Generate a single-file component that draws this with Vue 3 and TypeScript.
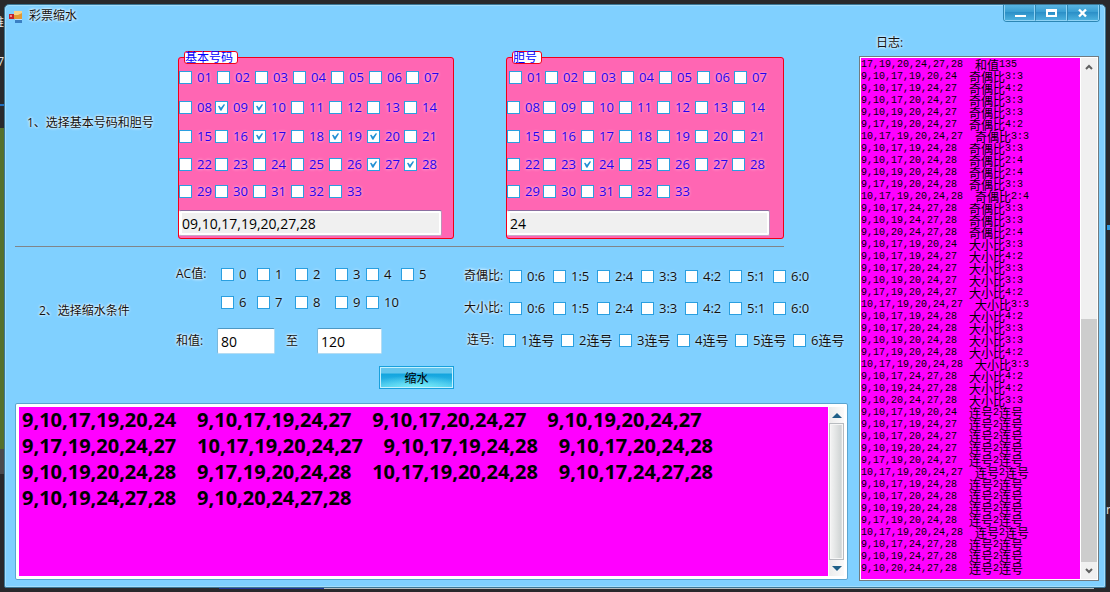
<script setup lang="ts">
import { ref } from 'vue'

interface Pool {
  key: string
  title: string
  picked: string[]
}

const numbers: string[] = Array.from({ length: 33 }, (_, i) => String(i + 1).padStart(2, '0'))
const numberRows: string[][] = [0, 7, 14, 21, 28].map((start) => numbers.slice(start, start + 7))

const pools = ref<Pool[]>([
  { key: 'base', title: '基本号码', picked: ['09', '10', '17', '19', '20', '27', '28'] },
  { key: 'key', title: '胆号', picked: ['24'] },
])

const acRows: string[][] = [
  ['0', '1', '2', '3', '4', '5'],
  ['6', '7', '8', '9', '10'],
]
const ratios: string[] = ['0:6', '1:5', '2:4', '3:3', '4:2', '5:1', '6:0']
const runs: string[] = ['1连号', '2连号', '3连号', '4连号', '5连号', '6连号']
const acPicked = ref<string[]>([])
const oddEvenPicked = ref<string[]>([])
const bigSmallPicked = ref<string[]>([])
const runPicked = ref<string[]>([])
const sumMin = ref('80')
const sumMax = ref('120')

const combos: string[] = [
  '9,10,17,19,20,24',
  '9,10,17,19,24,27',
  '9,10,17,20,24,27',
  '9,10,19,20,24,27',
  '9,17,19,20,24,27',
  '10,17,19,20,24,27',
  '9,10,17,19,24,28',
  '9,10,17,20,24,28',
  '9,10,19,20,24,28',
  '9,17,19,20,24,28',
  '10,17,19,20,24,28',
  '9,10,17,24,27,28',
  '9,10,19,24,27,28',
  '9,10,20,24,27,28',
]
const result = [0, 4, 8, 12].map((s) => combos.slice(s, s + 4).join('    ')).join('\n')

const oddEven = ['3:3', '4:2', '3:3', '3:3', '4:2', '3:3', '3:3', '2:4', '2:4', '3:3', '2:4', '3:3', '3:3', '2:4']
const bigSmall = ['3:3', '4:2', '3:3', '3:3', '4:2', '3:3', '4:2', '3:3', '3:3', '4:2', '3:3', '4:2', '4:2', '3:3']

interface LogLine {
  combo: string
  name: string
  value: string
  unit: string
}
const logLines: LogLine[] = [
  { combo: '17,19,20,24,27,28', name: '和值', value: '135', unit: '' },
  ...combos.map((combo, i) => ({ combo, name: '奇偶比', value: oddEven[i], unit: '' })),
  ...combos.map((combo, i) => ({ combo, name: '大小比', value: bigSmall[i], unit: '' })),
  ...combos.map((combo) => ({ combo, name: '连号', value: '2', unit: '连号' })),
]
</script>

<template>
  <div class="desktop">
    <span class="scrap scrap-word" aria-hidden="true">维</span>
    <span class="scrap scrap-seven" aria-hidden="true">7</span>
    <span class="scrap scrap-n" aria-hidden="true">n</span>
    <main class="window">
      <header class="titlebar">
        <svg class="app-icon" width="14" height="14" viewBox="0 0 14 14" aria-hidden="true">
          <path d="M5 1h8v8h-8z" fill="#e39a34" />
          <path d="M5 1h8v2l-4 2h-4z" fill="#f6d48a" />
          <path d="M0 4h5v5h-5z" fill="#c4202c" />
          <path d="M1 5h2v2h-2z" fill="#f58a80" />
          <path d="M6 9h7v4h-7z" fill="#3a7fc4" />
          <path d="M6 9h7v1h-7z" fill="#bfe0ff" />
        </svg>
        <h1>彩票缩水</h1>
        <div class="caption-buttons">
          <button type="button" aria-label="最小化">
            <svg width="12" height="10" viewBox="0 0 12 10"><rect x="1" y="7" width="11" height="2" fill="#fff" /></svg>
          </button>
          <button type="button" aria-label="最大化">
            <svg width="12" height="10" viewBox="0 0 12 10"><path d="M1 1h11v8h-11zM3 4v3h7v-3z" fill="#fff" fill-rule="evenodd" /></svg>
          </button>
          <button type="button" aria-label="关闭">
            <svg width="12" height="10" viewBox="0 0 12 10"><path d="M2 1.500L9 8.500M9 1.500L2 8.500" fill="none" stroke="#fff" stroke-width="2.400" /></svg>
          </button>
        </div>
      </header>

      <div class="body">
        <div class="work">
          <section class="step-one">
            <h2 class="step-title">1、选择基本号码和胆号</h2>
            <fieldset v-for="pool in pools" :key="pool.key" class="pool" :class="pool.key">
              <legend>{{ pool.title }}</legend>
              <div class="pool-rows">
                <div v-for="(row, r) in numberRows" :key="r" class="pool-row">
                  <label v-for="n in row" :key="n" class="tick">
                    <input v-model="pool.picked" type="checkbox" :value="n" />{{ n }}
                  </label>
                </div>
              </div>
              <input class="text picked" type="text" readonly :aria-label="pool.title" :value="pool.picked.join(',')" />
            </fieldset>
          </section>

          <section class="step-two">
            <h2 class="step-title">2、选择缩水条件</h2>
            <div class="left-conditions">
              <div v-for="(row, r) in acRows" :key="r" class="ac-row">
                <span class="caption">{{ r === 0 ? 'AC值:' : '' }}</span>
                <label v-for="n in row" :key="n" class="tick">
                  <input v-model="acPicked" type="checkbox" :value="n" />{{ n }}
                </label>
              </div>
              <div class="sum-row">
                <label class="caption" for="sum-min">和值:</label>
                <input id="sum-min" v-model="sumMin" class="text sum-min" type="text" />
                <label class="to" for="sum-max">至</label>
                <input id="sum-max" v-model="sumMax" class="text sum-max" type="text" />
              </div>
            </div>
            <div class="right-conditions">
              <div class="ratio-row">
                <span class="caption">奇偶比:</span>
                <label v-for="n in ratios" :key="n" class="tick">
                  <input v-model="oddEvenPicked" type="checkbox" :value="n" />{{ n }}
                </label>
              </div>
              <div class="ratio-row">
                <span class="caption">大小比:</span>
                <label v-for="n in ratios" :key="n" class="tick">
                  <input v-model="bigSmallPicked" type="checkbox" :value="n" />{{ n }}
                </label>
              </div>
              <div class="ratio-row runs">
                <span class="caption">连号:</span>
                <label v-for="n in runs" :key="n" class="tick">
                  <input v-model="runPicked" type="checkbox" :value="n" />{{ n }}
                </label>
              </div>
            </div>
          </section>

          <button type="button" class="shrink">缩水</button>

          <div class="result">
            <textarea readonly aria-label="缩水结果" :value="result"></textarea>
            <div class="skin-scroll">
              <button type="button" aria-label="向上">
                <svg width="10" height="5" viewBox="0 0 10 5"><path d="M0 5L5 0L10 5z" fill="#1f5f88" /></svg>
              </button>
              <div class="skin-thumb"></div>
              <button type="button" aria-label="向下">
                <svg width="10" height="5" viewBox="0 0 10 5"><path d="M0 0L5 5L10 0z" fill="#1f5f88" /></svg>
              </button>
            </div>
          </div>
        </div>

        <aside class="log-panel">
          <h2 id="log-title">日志:</h2>
          <div class="log-box">
            <div class="log" role="log" aria-labelledby="log-title" tabindex="0">
              <p v-for="(line, i) in logLines" :key="i"><span>{{ line.combo }}&nbsp;&nbsp;</span><b>{{ line.name }}</b><span>{{ line.value }}</span><b>{{ line.unit }}</b></p>
            </div>
            <div class="plain-scroll">
              <button type="button" aria-label="日志向上">
                <svg width="8" height="6" viewBox="0 0 8 6"><path d="M1 5L4 2L7 5" fill="none" stroke="#606060" stroke-width="2" /></svg>
              </button>
              <div class="plain-track"><div class="plain-thumb"></div></div>
              <button type="button" aria-label="日志向下">
                <svg width="8" height="6" viewBox="0 0 8 6"><path d="M1 1L4 4L7 1" fill="none" stroke="#606060" stroke-width="2" /></svg>
              </button>
            </div>
          </div>
        </aside>
      </div>
    </main>
  </div>
</template>

<style>
body {
  margin: 0;
  background: #29292c;
}
</style>

<style scoped>
* {
  box-sizing: border-box;
}

.desktop {
  position: relative;
  display: flex;
  min-height: 100vh;
  padding: 4px;
  overflow: hidden;
  background:
    linear-gradient(#24369a, #24369a) 219px 588px / 105px 1px no-repeat,
    linear-gradient(90deg, transparent 324px, #b5bcc0 324px, #b5bcc0 1094px, transparent 1094px) 0 588px / 100% 1px no-repeat,
    linear-gradient(#1f6fc0, #1f6fc0) 0 104px / 4px 2px no-repeat,
    linear-gradient(#55702c, #55702c) 0 128px / 4px 321px no-repeat,
    linear-gradient(#4a4a4d, #4a4a4d) 0 449px / 4px 25px no-repeat,
    linear-gradient(#2f9be0, #2f9be0) 1107px 225px / 3px 5px no-repeat,
    #29292c;
  font-family: "Open Sans", "Noto Sans CJK SC", sans-serif;
  font-size: 12px;
  color: #111;
}

.scrap {
  position: absolute;
  color: #e4e4e4;
  line-height: 14px;
}

.scrap-word {
  top: 16px;
  right: calc(100% - 4px);
}

.scrap-seven {
  top: 55px;
  right: calc(100% - 4px);
}

.scrap-n {
  top: 503px;
  left: calc(100% - 4px);
}

.window {
  position: relative;
  flex: 1;
  display: flex;
  flex-direction: column;
  border: 1px solid #3b7796;
  border-radius: 5px 5px 2px 2px;
  background: #80d0ff;
  box-shadow: inset 0 0 0 1px #a4ddfc;
}

h1,
h2 {
  margin: 0;
  font-size: 12px;
  font-weight: 400;
  line-height: 16px;
  text-shadow: 0 0 3px #fff, 0 0 3px #fff;
}

.titlebar {
  display: flex;
  align-items: flex-start;
  height: 24px;
  padding: 0 5px 0 4px;
}

.app-icon {
  margin: 5px 6px 0 0;
}

.titlebar h1 {
  margin-top: 3px;
}

.caption-buttons {
  display: flex;
  margin-left: auto;
  border: 1px solid #2c86b4;
  border-top: 0;
  border-radius: 0 0 4px 4px;
  overflow: hidden;
}

.caption-buttons button {
  display: flex;
  align-items: center;
  justify-content: center;
  width: 31px;
  height: 16px;
  padding: 0;
  border: 1px solid #8fd3f5;
  border-top: 0;
  background: linear-gradient(#58b4e2, #3a9fd3 45%, #2c90c8 50%, #4bb0de);
}

.caption-buttons button + button {
  width: 32px;
  border-left-color: #2c86b4;
}

.body {
  flex: 1;
  display: grid;
  grid-template-columns: minmax(0, 1fr) 240px;
  column-gap: 11px;
  padding: 0 6px 6px 10px;
}

.work {
  display: flex;
  flex-direction: column;
}

.step-one {
  display: grid;
  grid-template-columns: 163px 276px 278px;
  margin-right: 64px;
  padding: 22px 0 7px;
  border-bottom: 1px solid #80858a;
}

.step-one .step-title {
  margin: 64px 0 0 12px;
}

.pool {
  min-width: 0;
  margin: 0;
  padding: 0 0 2px;
  border: 1px solid #f00018;
  border-radius: 3px;
  background: #ff66b3;
}

.pool.key {
  margin-left: 52px;
  width: 278px;
}

.pool legend {
  height: 13px;
  margin-left: 5px;
  padding: 0 4px 0 0;
  border: 1px solid #f00018;
  border-radius: 3px;
  background: #fff;
  color: #00f;
  font-family: "Noto Sans CJK SC", sans-serif;
  font-size: 12px;
  line-height: 10px;
}

.pool-rows {
  display: grid;
  grid-template-rows: 30px 29px 28px 27px 13px;
  padding-top: 7px;
}

.pool-row {
  display: grid;
  grid-template-columns: 36px repeat(4, 38px) 37px auto;
  align-items: start;
  justify-content: start;
}

.pool.base .pool-row:first-child {
  grid-template-columns: repeat(5, 38px) 37px auto;
}

.pool.key .pool-row:first-child {
  padding-left: 2px;
}

.tick {
  display: flex;
  align-items: center;
  gap: 5px;
  height: 13px;
  font-size: 13px;
  line-height: 13px;
  white-space: nowrap;
  text-shadow: 0 0 3px rgba(255, 255, 255, 0.8);
}

.pool .tick {
  color: #2600f0;
}

.tick input {
  appearance: none;
  flex: none;
  width: 13px;
  height: 13px;
  margin: 0;
  border: 1px solid #2a9fe0;
  background: #fff;
}

.tick input:checked::before {
  content: "";
  display: block;
  width: 7px;
  height: 7px;
  margin: 2px;
  background: #2290d4;
  clip-path: polygon(0 30%, 20% 25%, 42% 55%, 85% 0, 100% 12%, 45% 100%, 30% 90%);
}

.text {
  min-width: 0;
  margin: 0;
  padding: 0 2px 0 3px;
  border: 1px solid #b5dcf2;
  border-top-color: #4d98c4;
  border-left-color: #7ab8dc;
  border-radius: 2px;
  background: #fff;
  color: #000;
  font-family: "Open Sans", sans-serif;
  font-size: 14px;
  line-height: 18px;
  outline: none;
}

.picked {
  display: block;
  width: 263px;
  height: 26px;
  margin-top: 12px;
  padding: 0 2px;
  border-color: #8b6fa0 #c090b8 #c8a8c8 #fff;
  background: #f0f0f0;
  box-shadow: inset 0 0 0 2px #fff;
}

.step-two {
  display: grid;
  grid-template-columns: 161px 288px minmax(0, 1fr);
}

.step-two .step-title {
  margin: 56px 0 0 24px;
}

.caption,
.to {
  font-size: 12px;
  line-height: 16px;
  text-shadow: 0 0 3px #fff, 0 0 3px #fff;
}

.left-conditions {
  display: flex;
  flex-direction: column;
  padding-top: 19px;
}

.ac-row {
  display: grid;
  grid-template-columns: 45px 36px 38px 40px 31px 35px auto;
  align-items: center;
  justify-content: start;
  height: 17px;
  margin-bottom: 11px;
}

.ac-row .caption {
  align-self: start;
}

.sum-row {
  display: grid;
  grid-template-columns: 41px 58px 42px 65px;
  align-items: center;
  height: 26px;
  margin-top: 6px;
}

.sum-row .text {
  height: 26px;
}

.to {
  text-align: center;
  padding-right: 8px;
}

.right-conditions {
  padding-top: 13px;
}

.ratio-row {
  display: grid;
  grid-template-columns: 45px repeat(7, 44px);
  align-items: center;
  height: 32px;
}

.ratio-row.runs {
  grid-template-columns: 36px repeat(6, 58px);
  padding-left: 3px;
}

.shrink {
  width: 75px;
  height: 23px;
  margin: 10px 0 14px 364px;
  padding: 0;
  border: 1px solid #18a0dc;
  background:
    radial-gradient(ellipse 70% 60% at 50% 100%, #7df0fa, transparent),
    linear-gradient(#64c6ee 0 30%, #12a4de 32%, #2cb4e6 70%, #4cc8ee);
  box-shadow: inset 0 0 0 1px #c4f0ff;
  color: #000;
  font-family: "Noto Sans CJK SC", sans-serif;
  font-size: 12px;
  line-height: 20px;
}

.result {
  flex: 1;
  display: flex;
  min-height: 120px;
  margin-bottom: 1px;
  padding: 3px;
  border: 1px solid #5aa4d0;
  border-radius: 2px;
  background: #fff;
}

.result textarea {
  flex: 1;
  min-width: 0;
  padding: 0 3px;
  border: 0;
  background: #f0f;
  color: #000;
  font-family: "Open Sans", sans-serif;
  font-size: 20px;
  font-weight: 700;
  line-height: 26px;
  resize: none;
  outline: none;
  overflow: hidden;
}

.skin-scroll {
  display: flex;
  flex-direction: column;
  width: 15px;
  margin-left: 1px;
  background: linear-gradient(90deg, #ececec, #fafafa);
}

.skin-scroll button,
.plain-scroll button {
  display: flex;
  align-items: center;
  justify-content: center;
  height: 16px;
  padding: 0;
  border: 0;
  background: none;
}

.skin-thumb {
  flex: 1;
  border: 1px solid #b8bcc0;
  background: linear-gradient(90deg, #f4f4f4, #e4e6e6 40%, #d2d6d6 80%, #e8e8e8);
  box-shadow: inset 0 0 0 1px #f6f6f6;
}

.log-panel {
  display: flex;
  flex-direction: column;
}

.log-panel h2 {
  margin: 6px 0 5px 17px;
}

.log-box {
  flex: 1;
  display: flex;
  padding: 1px;
  border: 1px solid #727b80;
  background: #fff;
}

.log {
  flex: 1;
  min-width: 0;
  padding: 1px 0 0;
  background: #f0f;
  overflow: hidden;
  outline: none;
}

.log p {
  display: flex;
  align-items: center;
  height: 12px;
  margin: 0;
  color: #000;
  font-family: "Liberation Mono", monospace;
  font-size: 10px;
  line-height: 12px;
  white-space: pre;
}

.log b {
  font-family: "Noto Sans CJK SC", sans-serif;
  font-size: 12px;
  font-weight: 400;
}

.plain-scroll {
  display: flex;
  flex-direction: column;
  width: 16px;
  margin-left: 1px;
  background: #f0f0f0;
}

.plain-scroll button {
  height: 17px;
}

.plain-track {
  flex: 1;
  display: flex;
  flex-direction: column;
  justify-content: flex-end;
}

.plain-thumb {
  height: 50%;
  background: #cdcdcd;
}
</style>
